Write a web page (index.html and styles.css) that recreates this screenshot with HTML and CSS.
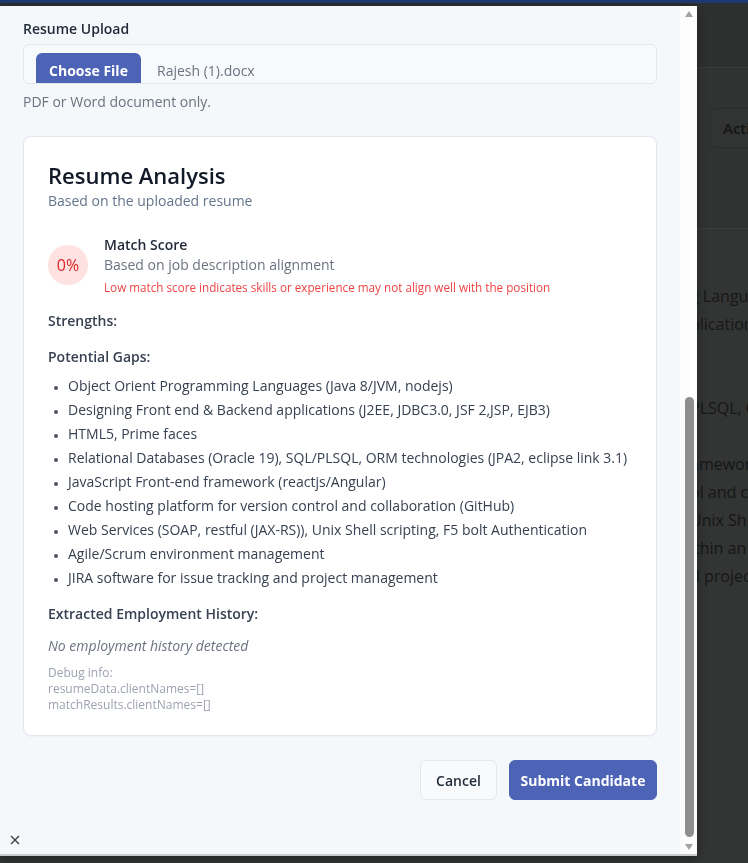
FILE: index.html
```html
<!DOCTYPE html>
<html lang="en">
<head>
<meta charset="utf-8">
<title>Submit Candidate</title>
<link rel="stylesheet" href="styles.css">
</head>
<body>
<div class="page">
  <div class="topbar"></div>
  <header class="page-header"></header>
  <section class="toolbar">
    <button class="bg-btn">Actions</button>
  </section>
  <section class="bg-content">
    <div class="bg-line">g Languages (Java 8/JVM, nodejs)</div>
    <div class="bg-line">plications (J2EE, JDBC3.0)</div>
    <div class="bg-line"></div>
    <div class="bg-line"></div>
    <div class="bg-line">PLSQL, ORM technologies</div>
    <div class="bg-line"></div>
    <div class="bg-line">amework (reactjs/Angular)</div>
    <div class="bg-line">ol and collaboration</div>
    <div class="bg-line"> Unix Shell scripting</div>
    <div class="bg-line">ithin an Agile team</div>
    <div class="bg-line">d project management</div>
  </section>
</div>

<div class="modal">
  <div class="modal-body">
    <label class="field-label">Resume Upload</label>
    <div class="file-box">
      <span class="file-btn">Choose File</span>
      <span class="file-name">Rajesh (1).docx</span>
    </div>
    <p class="hint">PDF or Word document only.</p>

    <div class="card">
      <h2 class="card-title">Resume Analysis</h2>
      <p class="card-sub">Based on the uploaded resume</p>

      <div class="score">
        <div class="score-circle">0%</div>
        <div class="score-text">
          <div class="score-title">Match Score</div>
          <div class="score-desc">Based on job description alignment</div>
          <div class="score-warn">Low match score indicates skills or experience may not align well with the position</div>
        </div>
      </div>

      <h4 class="section-title">Strengths:</h4>

      <h4 class="section-title">Potential Gaps:</h4>
      <ul class="gaps">
        <li>Object Orient Programming Languages (Java 8/JVM, nodejs)</li>
        <li>Designing Front end &amp; Backend applications (J2EE, JDBC3.0, JSF 2,JSP, EJB3)</li>
        <li>HTML5, Prime faces</li>
        <li>Relational Databases (Oracle 19), SQL/PLSQL, ORM technologies (JPA2, eclipse link 3.1)</li>
        <li>JavaScript Front-end framework (reactjs/Angular)</li>
        <li>Code hosting platform for version control and collaboration (GitHub)</li>
        <li>Web Services (SOAP, restful (JAX-RS)), Unix Shell scripting, F5 bolt Authentication</li>
        <li>Agile/Scrum environment management</li>
        <li>JIRA software for issue tracking and project management</li>
      </ul>

      <h4 class="section-title section-title-tight">Extracted Employment History:</h4>
      <p class="empty">No employment history detected</p>
      <div class="debug">
        <div>Debug info:</div>
        <div>resumeData.clientNames=[]</div>
        <div>matchResults.clientNames=[]</div>
      </div>
    </div>

    <div class="actions">
      <button class="btn btn-outline">Cancel</button>
      <button class="btn btn-primary">Submit Candidate</button>
    </div>
  </div>

  <div class="scrollbar">
    <span class="arrow arrow-up"></span>
    <span class="thumb"></span>
    <span class="arrow arrow-down"></span>
  </div>

  <button class="close" aria-label="Close">
    <svg width="10" height="10" viewBox="0 0 10 10"><path d="M1 1 L9 9 M9 1 L1 9" stroke="#3b3b3b" stroke-width="1.3" fill="none"/></svg>
  </button>
</div>
</body>
</html>
```

FILE: styles.css
```css
* { box-sizing: border-box; }

html, body {
  margin: 0;
  padding: 0;
  height: 100%;
}

body {
  font-family: "Open Sans", "Noto Sans", sans-serif;
  background: #333434;
  overflow: hidden;
}

/* ---------- dimmed page behind the modal ---------- */
.page {
  width: 748px;
  height: 863px;
  background: #333434;
  overflow: hidden;
}

.topbar {
  height: 3px;
  background: #1d3a72;
}

.page-header {
  height: 65px;
  background: #2e2f2f;
  border-bottom: 1px solid #3a3b3b;
}

.toolbar {
  height: 161px;
  padding: 40px 0 0 710px;
  border-bottom: 1px solid #3a3b3b;
  background: #313232;
}

.bg-btn {
  height: 40px;
  width: 38px;
  padding: 0 0 0 12px;
  text-align: left;
  white-space: nowrap;
  overflow: hidden;
  font: 600 15px "Open Sans", sans-serif;
  color: #141515;
  background: #323333;
  border: 1px solid #2b2c2c;
  border-right: 0;
  border-radius: 6px 0 0 6px;
}

.bg-content {
  width: 58px;
  margin-left: 690px;
  padding-top: 53px;
  font-size: 16px;
  line-height: 28px;
  color: #161717;
  white-space: nowrap;
  overflow: hidden;
}

.bg-line {
  height: 28px;
}

/* ---------- modal ---------- */
.modal {
  position: fixed;
  top: 6px;
  left: 0;
  width: 697px;
  height: 850px;
  background: #f5f8fb;
  border-bottom: 2px solid #c9cbcd;
  box-shadow: 0 2px 10px rgba(0, 0, 0, 0.35);
  overflow: hidden;
}

.modal-body {
  width: 680px;
  padding: 13px 23px 0 23px;
  color: #1f2937;
}

.field-label {
  display: block;
  font-size: 14px;
  line-height: 20px;
  font-weight: 600;
  color: #1f2937;
  margin-bottom: 5px;
}

.file-box {
  height: 40px;
  border: 1px solid #e2e8f0;
  border-radius: 6px;
  background: #f7fafc;
  overflow: hidden;
  display: flex;
  align-items: flex-start;
  padding-left: 12px;
}

.file-btn {
  margin-top: 8px;
  width: 105px;
  height: 40px;
  padding-top: 8px;
  line-height: 20px;
  text-align: center;
  background: #4c63b6;
  color: #fff;
  font-size: 14px;
  font-weight: 700;
  border-radius: 6px;
  white-space: nowrap;
}

.file-name {
  margin-top: 16px;
  margin-left: 16px;
  line-height: 20px;
  font-size: 14px;
  color: #6b7280;
}

.hint {
  margin: 8px 0 0;
  font-size: 14px;
  line-height: 20px;
  color: #6b7280;
}

/* ---------- analysis card ---------- */
.card {
  margin-top: 24px;
  background: #fff;
  border: 1px solid #e2e8f0;
  border-radius: 8px;
  box-shadow: 0 1px 2px rgba(0, 0, 0, 0.04);
  padding: 24px 24px 22px;
}

.card-title {
  margin: 0;
  font-size: 22px;
  line-height: 28px;
  font-weight: 600;
  color: #111827;
}

.card-sub {
  margin: 2px 0 0;
  font-size: 14px;
  line-height: 20px;
  color: #64748b;
}

.score {
  margin-top: 24px;
  display: flex;
  align-items: center;
  gap: 16px;
}

.score-circle {
  width: 40px;
  height: 40px;
  flex: none;
  border-radius: 50%;
  background: #fee2e2;
  color: #dc2626;
  font-size: 16px;
  display: flex;
  align-items: center;
  justify-content: center;
}

.score-title {
  font-size: 14px;
  line-height: 20px;
  font-weight: 600;
  color: #1f2937;
}

.score-desc {
  font-size: 14px;
  line-height: 20px;
  color: #6b7280;
}

.score-warn {
  margin-top: 4px;
  font-size: 11.7px;
  line-height: 16px;
  color: #ef4444;
}

.section-title {
  margin: 16px 0 0;
  font-size: 14px;
  line-height: 20px;
  font-weight: 600;
  color: #374151;
}

.section-title-tight {
  margin-top: 14px;
}

.gaps {
  margin: 7px 0 0;
  padding-left: 20px;
  font-size: 14px;
  line-height: 24px;
  color: #374151;
}

.gaps li::marker {
  font-size: 10px;
  color: #4b5563;
}

.empty {
  margin: 12px 0 0;
  font-size: 14px;
  line-height: 20px;
  font-style: italic;
  color: #6b7280;
}

.debug {
  margin-top: 9px;
  font-size: 12px;
  line-height: 16px;
  color: #9ca3af;
}

/* ---------- footer actions ---------- */
.actions {
  margin-top: 24px;
  display: flex;
  justify-content: flex-end;
  gap: 12px;
}

.btn {
  height: 40px;
  padding: 0 8px;
  font-family: inherit;
  font-size: 14px;
  font-weight: 600;
  border-radius: 6px;
  white-space: nowrap;
  cursor: pointer;
}

.btn-outline {
  width: 77px;
  background: #f8fafc;
  border: 1px solid #e2e8f0;
  color: #1f2937;
}

.btn-primary {
  width: 148px;
  background: #4c63b6;
  border: 1px solid #4c63b6;
  color: #fff;
  font-weight: 700;
}

/* ---------- fake scrollbar ---------- */
.scrollbar {
  position: absolute;
  top: 0;
  right: 0;
  bottom: 0;
  width: 17px;
  background: #fcfcfc;
}

.thumb {
  position: absolute;
  left: 5px;
  top: 391px;
  width: 9px;
  height: 440px;
  border-radius: 5px;
  background: #8e8e8e;
}

.arrow {
  position: absolute;
  left: 5px;
  width: 0;
  height: 0;
  border-left: 4.5px solid transparent;
  border-right: 4.5px solid transparent;
}

.arrow-up {
  top: 5px;
  border-bottom: 6px solid #a3a3a3;
}

.arrow-down {
  top: 838px;
  border-top: 6px solid #a3a3a3;
}

.close {
  position: absolute;
  left: 10px;
  top: 829px;
  width: 10px;
  height: 10px;
  padding: 0;
  border: 0;
  background: none;
  display: flex;
}
```
